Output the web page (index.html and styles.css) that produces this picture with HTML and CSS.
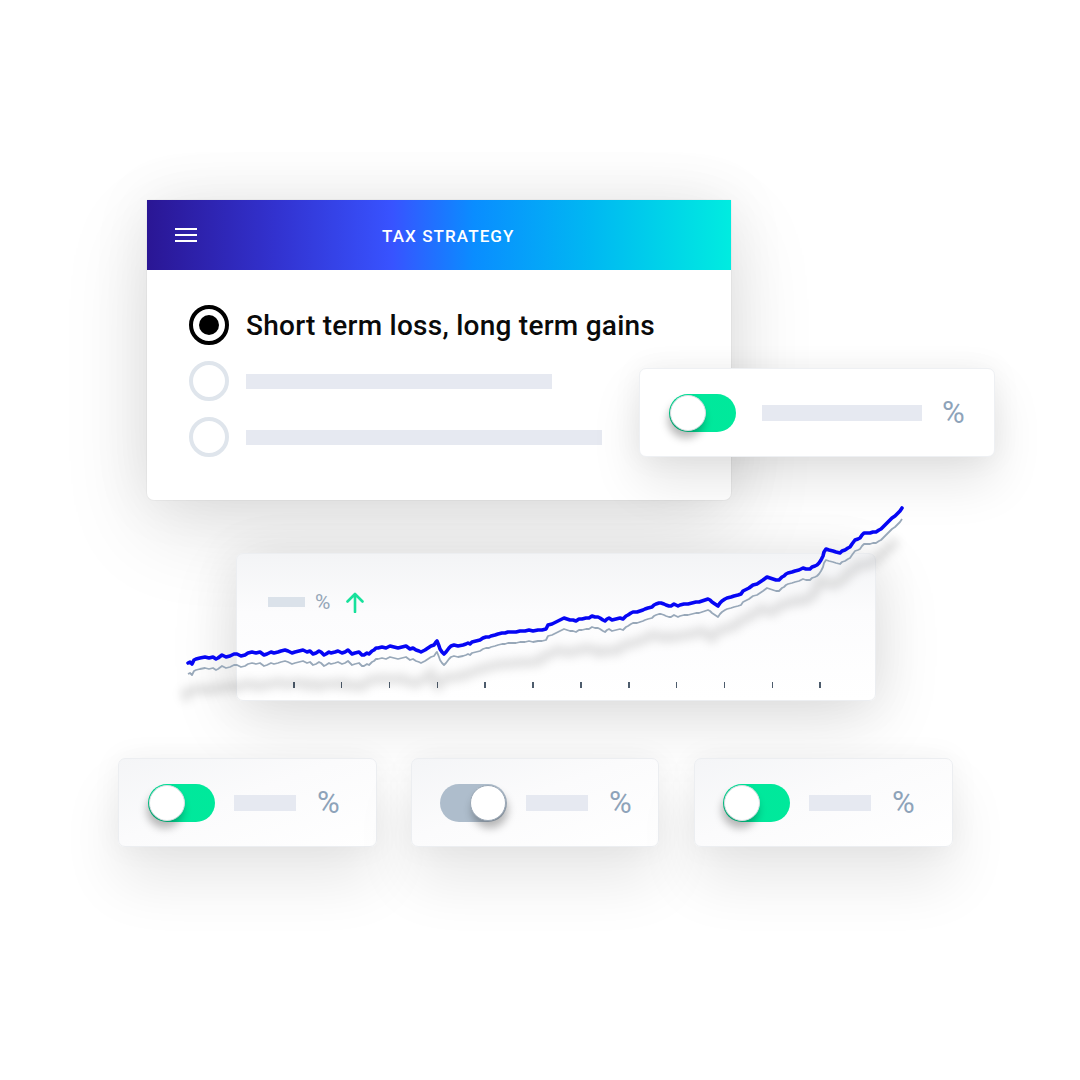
FILE: index.html
```html
<!DOCTYPE html>
<html>
<head>
<meta charset="utf-8">
<link rel="stylesheet" href="styles.css">
</head>
<body>
<div class="canvas">
  <div class="card main-card">
    <div class="header">
      <div class="hamburger"><span></span><span></span><span></span></div>
      <div class="title">TAX STRATEGY</div>
    </div>
    <div class="options">
      <div class="option">
        <div class="radio checked"><div class="dot"></div></div>
        <div class="option-label">Short term loss, long term gains</div>
      </div>
      <div class="option">
        <div class="radio"></div>
        <div class="bar bar-long1"></div>
      </div>
      <div class="option">
        <div class="radio"></div>
        <div class="bar bar-long2"></div>
      </div>
    </div>
  </div>

  <div class="card toggle-card side-card">
    <div class="toggle on"><div class="knob"></div></div>
    <div class="bar bar-mid"></div>
    <div class="pct">%</div>
  </div>

  <div class="card chart-card">
    <div class="legend">
      <div class="legend-bar"></div>
      <div class="legend-pct">%</div>
      <svg class="arrow" width="20" height="22" viewBox="0 0 20 22"><path d="M10 21 V3 M2.5 10.5 L10 3 L17.5 10.5" fill="none" stroke="#17e19b" stroke-width="2.6" stroke-linecap="round" stroke-linejoin="round"/></svg>
    </div>
    <div class="ticks">
      <span></span><span></span><span></span><span></span><span></span><span></span>
      <span></span><span></span><span></span><span></span><span></span><span></span>
    </div>
  </div>

  <svg class="chart-lines" width="730" height="200" viewBox="180 500 730 200">
    <defs>
      <filter id="blur" x="-10%" y="-50%" width="120%" height="200%"><feGaussianBlur stdDeviation="5"/></filter>
      <polyline id="series" fill="none" points="188,663 190,662 192,664 194,660 196,659 200,658 205,657 209,658 213,657 216,659 218,658 222,655 226,657 230,656 234,654 237,654 241,656 245,655 248,653 252,652 256,653 260,652 264,655 267,654 271,652 274,653 278,652 281,651 285,650 288,651 292,653 295,652 299,651 303,650 307,652 310,651 313,654 316,653 319,651 321,652 324,655 326,654 329,652 331,653 335,652 338,651 342,653 345,652 348,650 352,654 355,653 359,652 362,655 364,655 367,653 369,654 372,651 374,650 376,648 378,648 382,647 386,648 390,646 394,647 398,648 402,647 406,646 410,649 413,648 416,650 419,651 421,652 425,650 428,648 431,646 434,645 436,642 437,641 439,646 440,649 442,652 444,654 446,652 449,648 451,646 454,645 458,646 463,645 466,644 468,643 470,644 472,642 476,641 480,640 483,638 486,637 489,637 491,636 495,635 498,634 502,633 505,633 508,632 512,632 516,632 520,631 525,631 529,630 533,631 538,630 542,630 546,629 547,627 548,625 552,624 556,622 560,620 564,618 567,619 570,620 573,620 576,621 579,619 582,619 586,618 589,618 592,616 595,617 598,617 600,618 603,620 605,621 607,619 609,618 612,620 616,619 620,618 623,619 626,616 628,615 631,613 633,612 637,612 640,611 643,610 645,609 648,608 652,607 654,605 656,604 659,603 661,603 664,604 666,605 669,606 671,606 674,604 676,605 678,606 680,605 684,604 688,604 692,603 696,602 699,602 702,601 705,600 708,599 710,600 712,602 715,604 718,606 720,603 722,601 725,599 727,598 731,597 734,596 738,595 741,594 743,591 745,590 749,588 753,585 757,584 760,582 763,580 767,577 770,578 773,579 776,580 779,580 782,577 784,576 786,574 788,573 792,572 795,571 799,570 803,568 806,569 810,569 812,567 815,566 817,565 819,563 821,560 823,556 824,552 826,549 829,550 833,551 836,552 840,553 842,551 845,550 848,548 850,547 852,544 855,540 858,539 860,538 862,535 864,533 867,533 870,533 873,532 876,532 879,530 881,529 883,527 885,525 887,523 889,521 891,519 892,518 895,516 897,514 900,511 902,508"/>
    </defs>
    <use href="#series" transform="translate(-6,32)" stroke="rgba(0,0,0,0.12)" stroke-width="9" filter="url(#blur)"/>
    <use href="#series" transform="translate(0,11)" stroke="#98a8b9" stroke-width="1.8" stroke-linejoin="round"/>
    <use href="#series" stroke="#0606f4" stroke-width="3.6" stroke-linejoin="round" stroke-linecap="round"/>
  </svg>

  <div class="card toggle-card bottom-card card-a">
    <div class="toggle on"><div class="knob"></div></div>
    <div class="bar bar-short"></div>
    <div class="pct">%</div>
  </div>
  <div class="card toggle-card bottom-card card-b">
    <div class="toggle off"><div class="knob"></div></div>
    <div class="bar bar-short"></div>
    <div class="pct">%</div>
  </div>
  <div class="card toggle-card bottom-card card-c">
    <div class="toggle on"><div class="knob"></div></div>
    <div class="bar bar-short"></div>
    <div class="pct">%</div>
  </div>
</div>
</body>
</html>
```
FILE: styles.css
```css
* { box-sizing: border-box; }
html, body { margin: 0; padding: 0; background: #ffffff; }
body { font-family: Roboto, "Liberation Sans", sans-serif; }

.canvas {
  position: relative;
  width: 1080px;
  height: 1080px;
  overflow: hidden;
  background: #ffffff;
}

.card {
  position: absolute;
  background: #ffffff;
  border-radius: 7px;
}

/* Main card */
.main-card {
  left: 147px;
  top: 200px;
  width: 584px;
  height: 300px;
  border-radius: 2px 2px 7px 7px;
  box-shadow: 0 30px 90px rgba(0, 0, 0, 0.11), 0 0 60px rgba(0, 0, 0, 0.08), 0 0 0 1px rgba(0,0,0,0.03);
  z-index: 1;
}
.header {
  height: 70px;
  display: flex;
  align-items: center;
  padding-left: 28px;
  gap: 185px;
  background: linear-gradient(90deg, #2a1694 0%, #3232cf 22%, #3853ff 42%, #0a8dff 56%, #00b8f2 76%, #00ece0 100%);
}
.hamburger {
  width: 22px;
  display: flex;
  flex-direction: column;
  gap: 4px;
}
.hamburger span {
  display: block;
  height: 2px;
  background: #ffffff;
}
.title {
  color: #ffffff;
  font-size: 17px;
  font-weight: 500;
  letter-spacing: 1.1px;
  padding-top: 1px;
}
.options {
  padding: 35px 0 0 42px;
  display: flex;
  flex-direction: column;
  gap: 16px;
}
.option {
  display: flex;
  align-items: center;
  height: 40px;
  gap: 17px;
}
.radio {
  width: 40px;
  height: 40px;
  border-radius: 50%;
  border: 4px solid #dfe5ec;
  display: flex;
  align-items: center;
  justify-content: center;
  flex: none;
}
.radio.checked { border-color: #000000; }
.radio .dot {
  width: 20px;
  height: 20px;
  border-radius: 50%;
  background: #000000;
}
.option-label {
  font-size: 28px;
  font-weight: 500;
  color: #0a0a0a;
  letter-spacing: 0.25px;
}
.bar {
  height: 15px;
  background: #e6e9f1;
}
.bar-long1 { width: 306px; }
.bar-long2 { width: 356px; }
.bar-mid { width: 160px; height: 16px; }
.bar-short { width: 62px; height: 16px; }

/* Toggle cards */
.toggle-card {
  display: flex;
  align-items: center;
  height: 89px;
  padding-left: 29px;
}
.side-card {
  left: 639px;
  top: 368px;
  width: 356px;
  gap: 26px;
  z-index: 3;
  border: 1px solid #eef0f3;
  box-shadow: 0 25px 50px rgba(0, 0, 0, 0.10), 0 0 30px rgba(0, 0, 0, 0.06);
}
.side-card .pct { margin-left: -6px; }
.bottom-card {
  top: 758px;
  gap: 19px;
  background: linear-gradient(160deg, #f4f5f7 0%, #fbfbfc 45%, #ffffff 100%);
  border: 1px solid #eceef1;
  box-shadow: 0 35px 60px rgba(0, 0, 0, 0.09), 0 0 30px rgba(0, 0, 0, 0.05);
  z-index: 2;
}
.bottom-card .pct { margin-left: 2px; }
.card-a { left: 118px; width: 259px; }
.card-b { left: 411px; width: 248px; padding-left: 28px; }
.card-c { left: 694px; width: 259px; padding-left: 28px; }

.toggle {
  position: relative;
  width: 67px;
  height: 38px;
  border-radius: 19px;
  flex: none;
}
.toggle.on { background: linear-gradient(90deg, #00d68f 0%, #00e89c 50%, #00e99b 100%); }
.toggle.off { background: #aebdcc; }
.knob {
  position: absolute;
  top: 1px;
  width: 36px;
  height: 36px;
  border-radius: 50%;
  background: #ffffff;
  border: 1px solid #d9dde2;
  box-shadow: -2px 7px 9px rgba(0, 0, 0, 0.28);
}
.toggle.on .knob { left: 1px; }
.toggle.off .knob { right: 1px; border-color: #9aa7b5; box-shadow: 2px 7px 9px rgba(0, 0, 0, 0.28); }

.pct {
  font-size: 31px;
  color: #8ea3b9;
  line-height: 1;
}

/* Chart card */
.chart-card {
  left: 236px;
  top: 553px;
  width: 640px;
  height: 148px;
  display: flex;
  flex-direction: column;
  padding: 37px 0 12px 31px;
  background: linear-gradient(180deg, #f3f4f6 0%, #fcfcfd 40%, #ffffff 100%);
  border: 1px solid #eceef1;
  box-shadow: 0 20px 70px rgba(0, 0, 0, 0.11), 0 0 50px rgba(0, 0, 0, 0.07);
  z-index: 2;
}
.legend {
  display: flex;
  align-items: center;
  height: 22px;
}
.legend-bar {
  width: 37px;
  height: 10px;
  background: #dbe2ea;
  margin-right: 10px;
}
.legend-pct {
  font-size: 21px;
  color: #95a6b8;
  margin-right: 15px;
  line-height: 1;
}
.arrow { display: block; }
.ticks {
  margin-top: auto;
  margin-left: 25px;
  width: 528px;
  display: flex;
  justify-content: space-between;
}
.ticks span {
  display: block;
  width: 1.5px;
  height: 6px;
  background: #4d5c6c;
}

.chart-lines {
  position: absolute;
  left: 180px;
  top: 500px;
  z-index: 4;
  overflow: visible;
}
```
